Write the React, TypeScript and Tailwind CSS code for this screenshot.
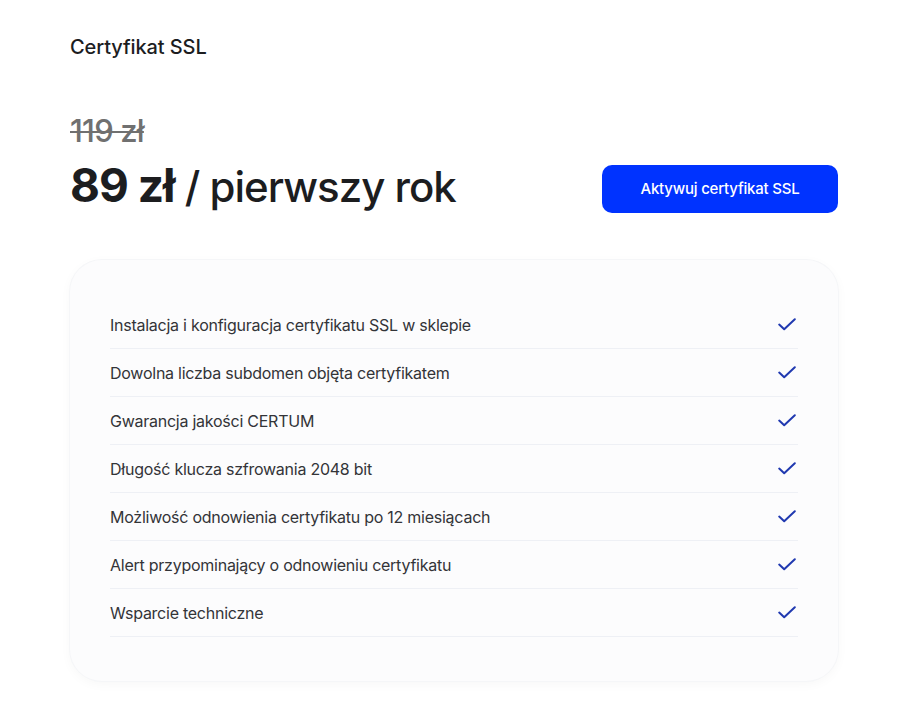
import React from "react";

const features = [
  "Instalacja i konfiguracja certyfikatu SSL w sklepie",
  "Dowolna liczba subdomen objęta certyfikatem",
  "Gwarancja jakości CERTUM",
  "Długość klucza szfrowania 2048 bit",
  "Możliwość odnowienia certyfikatu po 12 miesiącach",
  "Alert przypominający o odnowieniu certyfikatu",
  "Wsparcie techniczne",
];

function Check() {
  return (
    <svg width="18" height="13" viewBox="0 0 18 13" fill="none">
      <path d="M1.2 6.6L6.2 11.3L16.8 1.2" stroke="#2039b0" strokeWidth="2" strokeLinecap="round" strokeLinejoin="round" />
    </svg>
  );
}

export default function App() {
  return (
    <div className="min-h-[709px] w-[897px] bg-white text-[#1c1d1f]" style={{ fontFamily: "Inter, 'Noto Sans', sans-serif" }}>
      <div className="pl-[70px] pr-[59px] pt-[34px]">
        <h1 className="text-[20px] font-medium leading-[26px] tracking-[-0.1px]">Certyfikat SSL</h1>
        <div className="mt-[52px] flex items-end justify-between">
          <div>
            <div className="text-[31px] font-medium leading-[38px] text-[#707070] line-through decoration-[2px] tracking-[-0.8px]">119 zł</div>
            <div className="mt-[6px] leading-[58px] tracking-[-1px]">
              <span className="text-[46px] font-bold">89 zł</span>
              <span className="text-[42px] font-medium"> / pierwszy rok</span>
            </div>
          </div>
          <button className="mb-[12px] h-[48px] w-[236px] rounded-[10px] bg-[#0033ff] text-[15px] font-medium text-white tracking-[-0.2px]">
            Aktywuj certyfikat SSL
          </button>
        </div>
        <div className="mt-[35px] rounded-[32px] bg-[#fcfcfd] px-[40px] pt-[41px] pb-[44px] shadow-[0_0_0_1px_#f5f6f8,0_3px_12px_rgba(0,0,0,0.035)]">
          {features.map((f) => (
            <div key={f} className="flex h-[48px] items-center justify-between border-b border-[#eef0f5] pr-[2px]">
              <span className="text-[16px] text-[#333438] tracking-[-0.25px]">{f}</span>
              <Check />
            </div>
          ))}
        </div>
      </div>
    </div>
  );
}
